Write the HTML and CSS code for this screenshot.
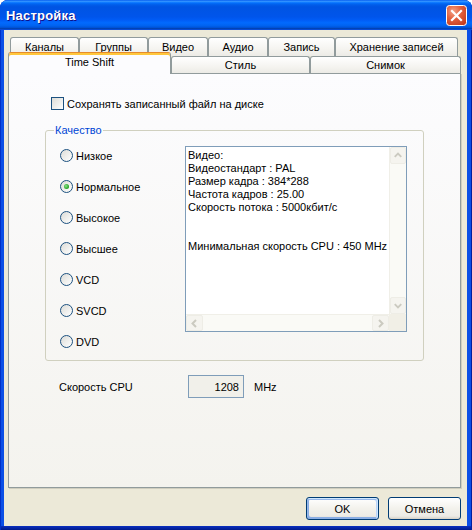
FILE: index.html
```html
<!DOCTYPE html>
<html lang="ru">
<head>
<meta charset="utf-8">
<title>Настройка</title>
<link rel="stylesheet" href="styles.css">
</head>
<body>
<div class="window">
  <div class="titlebar">
    <span class="title">Настройка</span>
    <button class="close" aria-label="Закрыть">
      <svg width="21" height="21" viewBox="0 0 21 21">
        <defs>
          <radialGradient id="cg" cx="35%" cy="30%" r="85%">
            <stop offset="0" stop-color="#F4A387"/>
            <stop offset="0.45" stop-color="#E2603E"/>
            <stop offset="1" stop-color="#C2391B"/>
          </radialGradient>
        </defs>
        <rect x="0.5" y="0.5" width="20" height="20" rx="3" fill="url(#cg)" stroke="#fff"/>
        <path d="M6 6 L15 15 M15 6 L6 15" stroke="#fff" stroke-width="2.2" stroke-linecap="square"/>
      </svg>
    </button>
  </div>
  <div class="client">
    <div class="tabs">
      <div class="tab-row back">
        <div class="tab t-kanaly">Каналы</div>
        <div class="tab t-gruppy">Группы</div>
        <div class="tab t-video">Видео</div>
        <div class="tab t-audio">Аудио</div>
        <div class="tab t-zapis">Запись</div>
        <div class="tab t-hranenie">Хранение записей</div>
      </div>
      <div class="tab-row front">
        <div class="tab selected t-timeshift">Time Shift</div>
        <div class="tab t-stil">Стиль</div>
        <div class="tab t-snimok">Снимок</div>
      </div>
    </div>
    <div class="panel">
      <label class="check-row"><span class="checkbox"></span><span>Сохранять записанный файл на диске</span></label>
      <fieldset class="group">
        <legend>Качество</legend>
        <div class="group-body">
          <div class="radios">
            <div class="radio-row"><span class="radio"></span><span>Низкое</span></div>
            <div class="radio-row"><span class="radio checked"></span><span>Нормальное</span></div>
            <div class="radio-row"><span class="radio"></span><span>Высокое</span></div>
            <div class="radio-row"><span class="radio"></span><span>Высшее</span></div>
            <div class="radio-row"><span class="radio"></span><span>VCD</span></div>
            <div class="radio-row"><span class="radio"></span><span>SVCD</span></div>
            <div class="radio-row"><span class="radio"></span><span>DVD</span></div>
          </div>
          <div class="infobox">
            <div class="info-text">Видео:
Видеостандарт : PAL
Размер кадра : 384*288
Частота кадров : 25.00
Скорость потока : 5000кбит/с


Минимальная скорость CPU : 450 MHz</div>
            <div class="vscroll">
              <div class="sbtn"><svg width="15" height="15" viewBox="0 0 15 15"><path d="M4 9 L7.5 5.5 L11 9" fill="none" stroke="#CBCAC0" stroke-width="2"/></svg></div>
              <div class="strack"></div>
              <div class="sbtn"><svg width="15" height="15" viewBox="0 0 15 15"><path d="M4 6 L7.5 9.5 L11 6" fill="none" stroke="#CBCAC0" stroke-width="2"/></svg></div>
            </div>
            <div class="hscroll">
              <div class="sbtn"><svg width="15" height="15" viewBox="0 0 15 15"><path d="M9 4 L5.5 7.5 L9 11" fill="none" stroke="#CBCAC0" stroke-width="2"/></svg></div>
              <div class="strack"></div>
              <div class="sbtn"><svg width="15" height="15" viewBox="0 0 15 15"><path d="M6 4 L9.5 7.5 L6 11" fill="none" stroke="#CBCAC0" stroke-width="2"/></svg></div>
            </div>
            <div class="corner"></div>
          </div>
        </div>
      </fieldset>
      <div class="cpu-row">
        <span class="cpu-label">Скорость CPU</span>
        <span class="cpu-field">1208</span>
        <span class="cpu-unit">MHz</span>
      </div>
    </div>
    <div class="buttons">
      <button class="btn default">OK</button>
      <button class="btn">Отмена</button>
    </div>
  </div>
</div>
</body>
</html>
```

FILE: styles.css
```css
* { box-sizing: border-box; }

html, body {
  margin: 0;
  padding: 0;
}

body {
  width: 472px;
  height: 530px;
  overflow: hidden;
  font: 11px "Liberation Sans", Arial, sans-serif;
  color: #000;
  background: #fff;
}

.window {
  width: 472px;
  height: 530px;
  display: flex;
  flex-direction: column;
  border-radius: 8px 8px 0 0;
  background: linear-gradient(to bottom, #0B4FE6 0, #0B4FE6 calc(100% - 4px), #0A2FC0 calc(100% - 4px), #001A8A 100%);
  box-shadow: inset 1px 0 #0030C8, inset -1px 0 #00209F;
}

.titlebar {
  flex: none;
  height: 30px;
  display: flex;
  align-items: center;
  justify-content: space-between;
  padding: 0 5px 0 6px;
  border-radius: 8px 8px 0 0;
  background: linear-gradient(to bottom,
    #0058EE 0%, #3593FF 4%, #288EFF 6%, #127DFF 8%, #036FFC 10%,
    #0262EE 14%, #0057E5 20%, #0054E3 24%, #0055EB 56%, #005BF5 66%,
    #026AFE 76%, #0062EF 86%, #0052D6 92%, #0040AB 94%, #0B4FE6 100%);
}

.title {
  color: #fff;
  font: bold 13px "Liberation Sans", Arial, sans-serif;
  text-shadow: 1px 1px #0F1089;
  letter-spacing: 0.2px;
}

.close {
  width: 21px;
  height: 21px;
  padding: 0;
  border: 0;
  background: none;
  display: block;
}

.close svg { display: block; }

.client {
  flex: 1;
  margin: 0 5px 4px 4px;
  background: #ECE9D8;
  display: flex;
  flex-direction: column;
  padding: 7px 6px 6px 4px;
}

/* Tabs */
.tabs { flex: none; }

.tab-row { display: flex; }

.tab-row.back {
  height: 19px;
  padding-left: 2px;
}

.tab-row.front {
  height: 17px;
  align-items: flex-end;
}

.tab {
  height: 100%;
  display: flex;
  align-items: center;
  justify-content: center;
  white-space: nowrap;
  border: 1px solid #919B9C;
  border-bottom: 0;
  border-radius: 3px 3px 0 0;
  background: linear-gradient(#FFFFFF, #F5F4F0 60%, #ECEBE6);
}

.tab.selected {
  height: 22px;
  margin-bottom: -1px;
  padding-bottom: 3px;
  z-index: 1;
  border-top: 1px solid #E68B2C;
  background: #FCFCFE;
  box-shadow: inset 0 2px #FFC73C;
}

.t-kanaly { width: 69px; }
.t-gruppy { width: 69px; }
.t-video { width: 60px; }
.t-audio { width: 60px; }
.t-zapis { width: 67px; }
.t-hranenie { width: 123px; }
.t-timeshift { width: 163px; }
.t-stil { width: 139px; }
.t-snimok { width: 151px; }

/* Panel */
.panel {
  flex: 1;
  border: 1px solid #919B9C;
  background: linear-gradient(#FCFCFE, #F4F3EE);
  box-shadow: 1px 1px 0 #D0CEBF;
  padding: 23px 0 0 36px;
}

.check-row {
  display: flex;
  align-items: center;
  gap: 3px;
  height: 13px;
  margin-left: 6px;
}

.checkbox {
  width: 13px;
  height: 13px;
  flex: none;
  border: 1px solid #1C5180;
  background: linear-gradient(135deg, #DCDCD7, #FFFFFF);
}

.group {
  margin: 14px 0 0 0;
  width: 379px;
  border: 1px solid #D0D0BF;
  border-radius: 3px;
  padding: 0;
  min-width: 0;
}

.group legend {
  margin-left: 8px;
  padding: 0 1px;
  color: #0046D5;
  line-height: 13px;
}

.group-body {
  display: flex;
  padding: 9px 0 12px 14px;
}

.radios {
  width: 125px;
  flex: none;
  display: flex;
  flex-direction: column;
  gap: 18px;
  margin-top: 3px;
}

.radio-row {
  display: flex;
  align-items: center;
  gap: 3px;
  height: 13px;
}

.radio {
  width: 13px;
  height: 13px;
  flex: none;
  border-radius: 50%;
  border: 1px solid #1C5180;
  background: linear-gradient(135deg, #DCDCD7, #FFFFFF);
  display: flex;
  align-items: center;
  justify-content: center;
}

.radio.checked::after {
  content: "";
  width: 5px;
  height: 5px;
  border-radius: 50%;
  background: radial-gradient(circle at 40% 40%, #8AE28A, #21A121 70%);
}

/* Info box */
.infobox {
  width: 222px;
  height: 186px;
  border: 1px solid #7F9DB9;
  background: #fff;
  display: grid;
  grid-template-columns: 1fr 17px;
  grid-template-rows: 1fr 17px;
}

.info-text {
  white-space: pre;
  overflow: hidden;
  line-height: 13px;
  padding: 2px 0 0 2px;
}

.vscroll, .hscroll {
  display: flex;
  background: #FAFAF6;
}

.vscroll {
  flex-direction: column;
  border-left: 1px solid #F0EFE8;
}

.hscroll {
  flex-direction: row;
  border-top: 1px solid #F0EFE8;
}

.strack { flex: 1; }

.sbtn {
  width: 17px;
  height: 17px;
  flex: none;
  border: 1px solid #EEEDE6;
  border-radius: 2px;
  background: #F5F4EF;
  display: flex;
  align-items: center;
  justify-content: center;
}

.vscroll .sbtn { width: 16px; }
.hscroll .sbtn { height: 16px; }

.sbtn svg { display: block; }

.corner { background: #F1EFE6; }

/* CPU row */
.cpu-row {
  display: flex;
  align-items: center;
  margin-top: 14px;
  height: 23px;
}

.cpu-label {
  width: 143px;
  padding-left: 14px;
}

.cpu-field {
  width: 56px;
  height: 23px;
  border: 1px solid #7F9DB9;
  background: #F1F0EA;
  display: flex;
  align-items: center;
  justify-content: flex-end;
  padding-right: 4px;
}

.cpu-unit { margin-left: 10px; }

/* Buttons */
.buttons {
  flex: none;
  display: flex;
  justify-content: flex-end;
  gap: 9px;
  margin-top: 9px;
}

.btn {
  width: 73px;
  height: 23px;
  padding: 0;
  font: 11px "Liberation Sans", Arial, sans-serif;
  color: #000;
  border: 1px solid #003C74;
  border-radius: 3px;
  background: linear-gradient(#FFFFFF, #F3F2EC 50%, #ECEBE6 86%, #D6D0C5);
}

.btn.default {
  box-shadow: inset -1px 1px #CEE7FF, inset 1px 2px #98B8EA, inset -2px 2px #BCD4F6, inset 1px -1px #89ADE4, inset 2px -2px #89ADE4;
}
```
